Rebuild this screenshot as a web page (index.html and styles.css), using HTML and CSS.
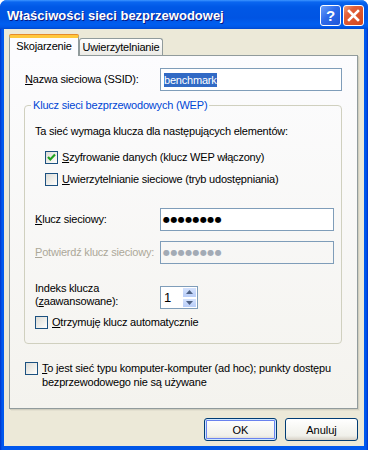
FILE: index.html
```html
<!DOCTYPE html>
<html>
<head>
    <title>Właściwości sieci bezprzewodowej</title>
    <link rel="stylesheet" href="styles.css">
</head>
<body>

<div class="window">
    <div class="titlebar">
        <span class="title">Właściwości sieci bezprzewodowej</span>
        <div class="caption-buttons">
            <span class="cbtn help">?</span>
            <span class="cbtn close">
                <svg width="13" height="13" viewBox="0 0 13 13">
                    <path d="M2 2 L11 11 M11 2 L2 11" stroke="#fff" stroke-width="2.6" stroke-linecap="square"/>
                </svg>
            </span>
        </div>
    </div>

    <div class="client">
        <div class="tabs">
            <div class="tab active">Skojarzenie</div>
            <div class="tab">Uwierzytelnianie</div>
        </div>

        <div class="panel">
            <div class="field-row ssid">
                <span class="label"><u>N</u>azwa sieciowa (SSID):</span>
                <div class="edit wide"><span class="sel">benchmark</span></div>
            </div>

            <fieldset class="group">
                <legend>Klucz sieci bezprzewodowych (WEP)</legend>
                <p class="note">Ta sieć wymaga klucza dla następujących elementów:</p>

                <div class="check indent first">
                    <span class="box checked">
                        <svg width="11" height="11" viewBox="0 0 11 11">
                            <path d="M2 5 L4.3 7.5 L9 2.5" fill="none" stroke="#21a121" stroke-width="2.2"/>
                        </svg>
                    </span>
                    <span><u>S</u>zyfrowanie danych (klucz WEP włączony)</span>
                </div>
                <div class="check indent second">
                    <span class="box"></span>
                    <span><u>U</u>wierzytelnianie sieciowe (tryb udostępniania)</span>
                </div>

                <div class="field-row key">
                    <span class="label"><u>K</u>lucz sieciowy:</span>
                    <div class="edit"><span class="dots">●●●●●●●●</span></div>
                </div>
                <div class="field-row confirm">
                    <span class="label disabled"><u>P</u>otwierdź klucz sieciowy:</span>
                    <div class="edit off"><span class="dots">●●●●●●●●</span></div>
                </div>
                <div class="field-row index">
                    <span class="label two-line">Indeks klucza<br>(<u>z</u>aawansowane):</span>
                    <div class="spin">
                        <span class="spin-value">1</span>
                        <div class="spin-arrows">
                            <span class="arrow up">
                                <svg width="7" height="4" viewBox="0 0 7 4"><path d="M0 4 L3.5 0 L7 4 Z" fill="#4d6185"/></svg>
                            </span>
                            <span class="arrow down">
                                <svg width="7" height="4" viewBox="0 0 7 4"><path d="M0 0 L3.5 4 L7 0 Z" fill="#4d6185"/></svg>
                            </span>
                        </div>
                    </div>
                </div>

                <div class="check auto">
                    <span class="box"></span>
                    <span><u>O</u>trzymuję klucz automatycznie</span>
                </div>
            </fieldset>

            <div class="check adhoc">
                <span class="box"></span>
                <span class="adhoc-text"><u>T</u>o jest sieć typu komputer-komputer (ad hoc); punkty dostępu<br>bezprzewodowego nie są używane</span>
            </div>
        </div>

        <div class="buttons">
            <button class="btn default">OK</button>
            <button class="btn">Anuluj</button>
        </div>
    </div>
</div>

</body>
</html>
```

FILE: styles.css
```css
/* XP style dialog */
body {
    margin: 0;
    font-family: "Liberation Sans", Arial, sans-serif;
    font-size: 11px;
    letter-spacing: -0.2px;
    color: #000;
    background: #fff;
}
.window {
    width: 368px;
    height: 450px;
    box-sizing: border-box;
    display: flex;
    flex-direction: column;
    background: linear-gradient(90deg, #0032c8 0, #0058ee 2px, #0055e5 50%, #0058ee calc(100% - 2px), #0032c8 100%);
    border-radius: 7px 7px 0 0;
    overflow: hidden;
}
.titlebar {
    height: 29px;
    flex: none;
    display: flex;
    align-items: center;
    justify-content: space-between;
    padding: 0 4px 0 7px;
    background: linear-gradient(#3d95ff 0, #0a66f0 2px, #0058e6 7px, #0054e3 18px, #005ef0 24px, #0058e8 27px, #0049d0 29px);
}
.title {
    color: #fff;
    font-weight: bold;
    font-size: 13px;
    letter-spacing: 0;
    text-shadow: 1px 1px 0 #0a1883;
    padding-top: 1px;
}
.caption-buttons {
    display: flex;
    gap: 2px;
    padding-top: 1px;
}
.cbtn {
    width: 19px;
    height: 19px;
    border: 1px solid #fff;
    border-radius: 3px;
    display: flex;
    align-items: center;
    justify-content: center;
}
.help {
    background: linear-gradient(135deg, #6a9ffa 0, #2e6bea 45%, #1d55d8 100%);
    color: #fff;
    font-weight: bold;
    font-size: 15px;
    letter-spacing: 0;
}
.close {
    background: linear-gradient(135deg, #f0a07c 0, #e2603a 30%, #d5471c 100%);
}
.client {
    flex: 1;
    margin: 0 4px 4px 4px;
    background: #ece9d8;
    padding: 7px 6px 5px 5px;
    display: flex;
    flex-direction: column;
}
.tabs {
    display: flex;
    align-items: flex-end;
    height: 19px;
}
.tab {
    box-sizing: border-box;
    height: 17px;
    width: 84px;
    border: 1px solid #919b9c;
    border-bottom: none;
    border-radius: 3px 3px 0 0;
    background: linear-gradient(#ffffff, #ecebe6);
    text-align: center;
    line-height: 16px;
}
.tab.active {
    position: relative;
    z-index: 1;
    width: 70px;
    height: 21px;
    margin-bottom: -1px;
    background: #fcfcfe;
    border-top: 3px solid #ffc83c;
    box-shadow: 0 -1px 0 #e68b2c;
    border-radius: 2px 2px 0 0;
    line-height: 16px;
}
.panel {
    height: 354px;
    box-sizing: border-box;
    border: 1px solid #919b9c;
    background: linear-gradient(#fcfcfe, #f4f3ee);
    box-shadow: 1px 1px 0 #d0cebf, 2px 2px 0 #e3e0d0;
    padding: 12px 15px 0 15px;
}
.field-row {
    display: grid;
    grid-template-columns: 135px 182px;
    align-items: center;
}
.field-row .label {
    line-height: 13px;
}
.edit {
    box-sizing: border-box;
    height: 23px;
    border: 1px solid #7f9db9;
    background: #fff;
    display: flex;
    align-items: center;
    padding-left: 3px;
}
.group .field-row {
    grid-template-columns: 125px 174px;
}
.sel {
    background: #316ac5;
    color: #fff;
    line-height: 14px;
}
.dots {
    font-family: "DejaVu Sans", sans-serif;
    font-size: 8px;
    letter-spacing: 0.4px;
    margin-left: -1px;
}
.edit.off {
    background: transparent;
    color: #a3abb5;
}
.disabled {
    color: #aca899;
}
.group {
    width: 318px;
    box-sizing: border-box;
    margin: 8px 0 0 -1px;
    padding: 0 0 12px 10px;
    border: 1px solid #d0d0bf;
    border-radius: 4px;
    height: 245px;
}
.group legend {
    color: #0046d5;
    padding: 0 2px;
    margin-left: -4px;
    line-height: 13px;
}
.note {
    margin: 13px 0 0;
    line-height: 13px;
}
.check {
    display: flex;
    align-items: flex-start;
    gap: 4px;
    line-height: 13px;
    white-space: nowrap;
}
.check.indent {
    margin-left: 10px;
}
.check.first {
    margin-top: 13px;
}
.check.second {
    margin-top: 9px;
}
.box {
    flex: none;
    box-sizing: border-box;
    width: 13px;
    height: 13px;
    border: 1px solid #1c5180;
    background: linear-gradient(135deg, #dcdcd7 0, #f5f4f0 70%, #ffffff 100%);
    display: flex;
    align-items: center;
    justify-content: center;
}
.field-row.key {
    margin-top: 22px;
}
.field-row.confirm {
    margin-top: 10px;
}
.field-row.index {
    margin-top: 18px;
    align-items: start;
}
.spin {
    margin-top: 4px;
    width: 38px;
    height: 23px;
    box-sizing: border-box;
    border: 1px solid #7f9db9;
    background: #fff;
    display: flex;
}
.spin-value {
    flex: 1;
    padding-left: 3px;
    font-size: 13px;
    line-height: 21px;
}
.spin-arrows {
    width: 15px;
    display: flex;
    flex-direction: column;
}
.arrow {
    flex: 1;
    box-sizing: border-box;
    background: linear-gradient(#d4e2fd, #b8cdf8);
    border: 1px solid #fff;
    display: flex;
    align-items: center;
    justify-content: center;
}
.check.auto {
    margin-top: 7px;
}
.check.adhoc {
    margin-top: 17px;
    line-height: 14px;
}
.check.adhoc .box {
    margin-top: 1px;
}
.buttons {
    display: flex;
    justify-content: flex-end;
    gap: 8px;
    margin-top: 9px;
}
.btn {
    width: 73px;
    height: 23px;
    border: 1px solid #003c74;
    border-radius: 3px;
    background: linear-gradient(#ffffff, #f0f0ea 80%, #d6d0c5);
    font-family: "Liberation Sans", Arial, sans-serif;
    font-size: 11px;
    color: #000;
    padding: 0;
}
.btn.default {
    box-shadow: inset 0 0 0 1px #cee7ff, inset 0 0 0 2px #6982ee;
}
```
